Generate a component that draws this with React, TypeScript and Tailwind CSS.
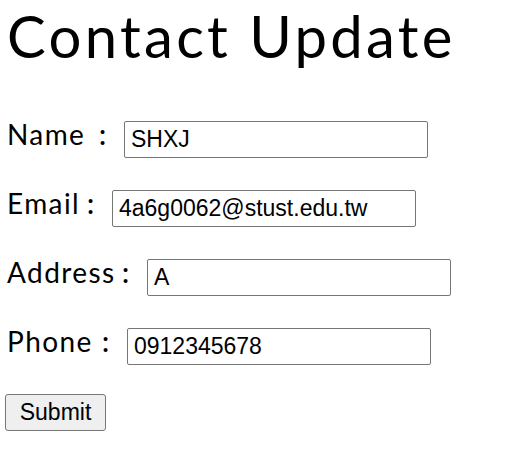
const fields = [
  { label: "Name", value: "SHXJ", width: "w-[117px]" },
  { label: "Email", value: "4a6g0062@stust.edu.tw", width: "w-[105px]" },
  { label: "Address", value: "A", width: "w-[140px]" },
  { label: "Phone", value: "0912345678", width: "w-[120px]" },
];

export default function App() {
  return (
    <div className="min-h-[450px] bg-white px-[7px] text-black">
      <h1 className="pt-[2px] font-['Lato',sans-serif] text-[58px] leading-[68px] tracking-[3.3px]">
        Contact Update
      </h1>
      <form className="mt-[51px] flex flex-col" onSubmit={(e) => e.preventDefault()}>
        {fields.map((f) => (
          <div key={f.label} className="mb-[32px] flex h-[37px] items-start">
            <label
              className={`${f.width} flex shrink-0 font-['Lato',sans-serif] text-[28px] leading-[27px]`}
            >
              <span className="flex-1 tracking-[1.4px]">{f.label}</span>
              <span className="w-[25px] font-semibold">:</span>
            </label>
            <input
              type="text"
              defaultValue={f.value}
              className="h-[37px] w-[304px] rounded-[2px] border border-[#767676] px-[6px] font-['Liberation_Sans',Arial,sans-serif] text-[23px] leading-[35px] outline-none"
            />
          </div>
        ))}
        <div className="-mt-[3px]">
          <button
            type="submit"
            className="-ml-[2px] h-[37px] w-[101px] rounded-[3px] border border-[#767676] bg-[#efefef] font-['Liberation_Sans',Arial,sans-serif] text-[23px] leading-[35px]"
          >
            Submit
          </button>
        </div>
      </form>
    </div>
  );
}
